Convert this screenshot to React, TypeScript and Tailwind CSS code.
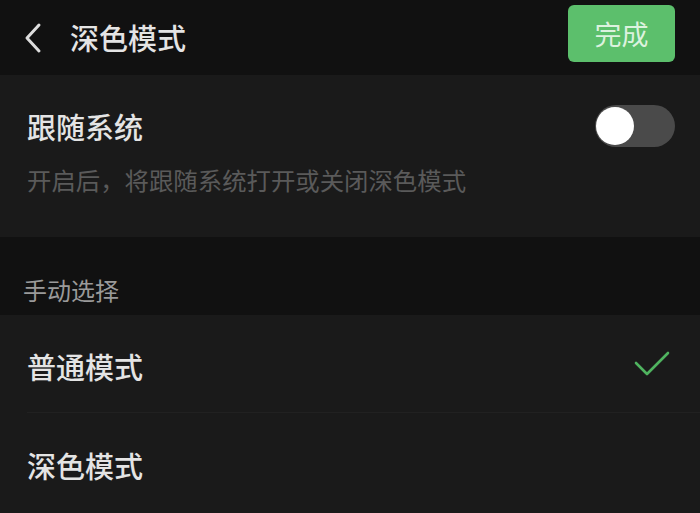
import React from "react";

const font = { fontFamily: '"Noto Sans CJK SC", "Noto Sans", sans-serif' };

export default function App() {
  return (
    <div className="w-[700px] h-[513px] overflow-hidden bg-[#1a1a1a] flex flex-col" style={font}>
      {/* Header */}
      <div className="h-[75px] shrink-0 bg-[#111111] flex items-center justify-between pl-[22px] pr-[25px]">
        <div className="flex items-center">
          <svg width="20" height="32" viewBox="0 0 20 32" className="mt-[1px]">
            <polyline points="17,3 5,16 17,29" fill="none" stroke="#dddddd" strokeWidth="3" strokeLinecap="round" strokeLinejoin="round" />
          </svg>
          <span className="ml-[28px] text-[29px] leading-none font-medium text-[#e4e4e4]">深色模式</span>
        </div>
        <div className="w-[107px] h-[57px] mt-[-8px] rounded-[6px] bg-[#5cbf6c] flex items-center justify-center">
          <span className="text-[27px] leading-none text-[#dcf2df]">完成</span>
        </div>
      </div>

      {/* Follow system */}
      <div className="h-[162px] shrink-0 bg-[#1a1a1a] pt-[30px] pl-[27px] pr-[25px]">
        <div className="h-[42px] flex items-center justify-between">
          <span className="text-[29px] leading-none font-medium text-[#e4e4e4]">跟随系统</span>
          <div className="w-[80px] h-[42px] rounded-full bg-[#4a4a4a] flex items-center">
            <div className="w-[38px] h-[38px] rounded-full bg-white ml-[1px]" />
          </div>
        </div>
        <div className="mt-[21px] text-[24.4px] leading-none text-[#5a5a5a]">开启后，将跟随系统打开或关闭深色模式</div>
      </div>

      {/* Section header */}
      <div className="h-[78px] shrink-0 bg-[#111111] flex items-end pl-[23px] pb-[13px]">
        <span className="text-[24px] leading-none text-[#9a9a9a]">手动选择</span>
      </div>

      {/* Options */}
      <div className="flex flex-col bg-[#1a1a1a] pl-[27px]">
        <div className="h-[98px] flex items-center justify-between pr-[30px] pt-[6px] border-b border-[#212121]">
          <span className="text-[29px] leading-none font-medium text-[#e4e4e4]">普通模式</span>
          <svg width="36" height="28" viewBox="0 0 36 28" className="mt-[-6px]">
            <polyline points="2,13 13,24 34,3" fill="none" stroke="#4fb35f" strokeWidth="2.6" strokeLinecap="round" strokeLinejoin="round" />
          </svg>
        </div>
        <div className="h-[98px] flex items-center pt-[6px]">
          <span className="text-[29px] leading-none font-medium text-[#e4e4e4]">深色模式</span>
        </div>
      </div>
    </div>
  );
}
